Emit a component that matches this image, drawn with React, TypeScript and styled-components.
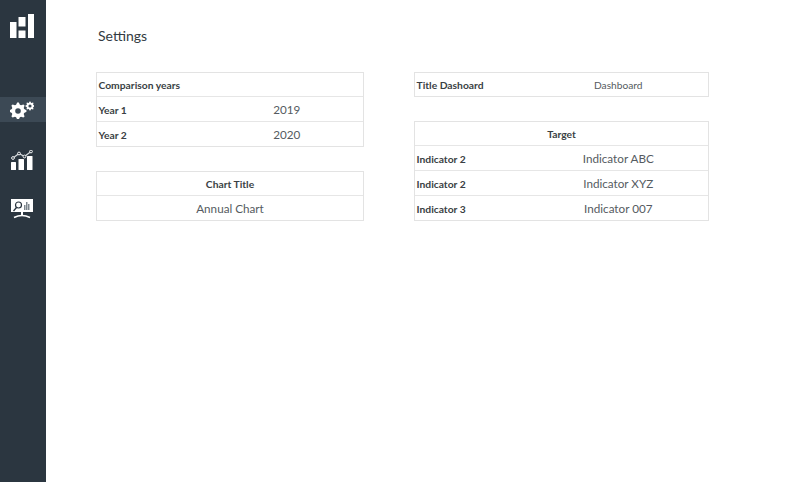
import React from "react";
import styled, { createGlobalStyle } from "styled-components";

const Global = createGlobalStyle`
  html, body { margin: 0; padding: 0; background: #fff; }
  body { font-family: Lato, "Open Sans", sans-serif; }
`;

const Page = styled.div`
  display: flex;
  width: 800px;
  height: 482px;
  overflow: hidden;
  background: #fff;
`;

const Sidebar = styled.nav`
  width: 46px;
  flex: none;
  background: #2b3640;
  display: flex;
  flex-direction: column;
`;

const NavItem = styled.div<{ $active?: boolean; $gap?: number }>`
  height: 25px;
  margin-top: ${(p) => p.$gap ?? 0}px;
  padding-right: 3px;
  display: flex;
  align-items: center;
  justify-content: center;
  background: ${(p) => (p.$active ? "#3c4955" : "transparent")};
`;

const Logo = styled.div`
  height: 24px;
  padding: 14px 2px 0 0;
  margin-bottom: 59px;
  display: flex;
  align-items: center;
  justify-content: center;
`;

const Main = styled.main`
  flex: 1;
  padding: 26px 0 0 50px;
`;

const Title = styled.h1`
  margin: 0 0 26px 2px;
  font-size: 14px;
  line-height: 20px;
  font-weight: 400;
  color: #333b42;
`;

const Columns = styled.div`
  display: flex;
  gap: 50px;
  align-items: flex-start;
`;

const Column = styled.div<{ $width: number }>`
  width: ${(p) => p.$width}px;
  display: flex;
  flex-direction: column;
  gap: 24px;
`;

const Table = styled.div`
  border: 1px solid #e3e3e3;
  display: flex;
  flex-direction: column;
`;

const Row = styled.div`
  height: 24px;
  display: flex;
  align-items: center;
  border-top: 1px solid #e6e6e6;
  &:first-child { height: 23px; border-top: none; }
`;

const Label = styled.div<{ $fixed?: boolean; $center?: boolean }>`
  width: ${(p) => (p.$fixed ? "112px" : "auto")};
  flex: ${(p) => (p.$fixed ? "none" : "1")};
  padding-left: ${(p) => (p.$center ? 0 : 1.5)}px;
  text-align: ${(p) => (p.$center ? "center" : "left")};
  font-size: 10.3px;
  font-weight: 700;
  color: #3a3f44;
  white-space: nowrap;
  ${Row}:not(:first-child) & { padding-top: 1px; }
`;

const Value = styled.div<{ $small?: boolean }>`
  flex: 1;
  text-align: center;
  font-size: ${(p) => (p.$small ? 10.2 : 11.7)}px;
  color: #555b61;
  white-space: nowrap;
`;

const LogoIcon = () => (
  <svg width="24" height="24" viewBox="0 0 24 24" fill="#fff">
    <rect x="0" y="8" width="6.5" height="16" />
    <rect x="8.5" y="3" width="7" height="9.5" />
    <rect x="8.5" y="16.5" width="7" height="7.5" />
    <rect x="18" y="0" width="6" height="24" />
  </svg>
);

const gearPath = (cx: number, cy: number, r: number, teeth: number) => {
  let d = "";
  const n = teeth * 4;
  for (let i = 0; i < n; i++) {
    const a = (i / n) * Math.PI * 2 - Math.PI / n;
    const rad = i % 4 === 0 || i % 4 === 1 ? r : r * 0.76;
    d += `${i === 0 ? "M" : "L"}${(cx + rad * Math.cos(a)).toFixed(2)} ${(cy + rad * Math.sin(a)).toFixed(2)}`;
  }
  return d + "Z";
};

const GearsIcon = () => (
  <svg width="24" height="18" viewBox="1 0 24 18">
    <path d={gearPath(9, 10, 8.5, 8)} fill="#fff" />
    <circle cx="9" cy="10" r="2.8" fill="#3c4955" />
    <path d={gearPath(21, 5, 4.6, 8)} fill="#fff" />
    <circle cx="21" cy="5" r="1.6" fill="#3c4955" />
  </svg>
);

const ChartIcon = () => (
  <svg width="22" height="20" viewBox="0 0 22 20" fill="#fff">
    <rect x="0" y="12" width="5" height="8" rx="0.5" />
    <rect x="7.5" y="9" width="5.5" height="11" rx="0.5" />
    <rect x="16" y="6" width="5.5" height="14" rx="0.5" />
    <path d="M2 8L8 3.5L13.5 6.5L20 1.5" stroke="#d5d9dc" strokeWidth="1.2" fill="none" />
    <circle cx="2" cy="8" r="1.4" fill="#2b3640" stroke="#fff" strokeWidth="0.9" />
    <circle cx="8" cy="3.5" r="1.4" fill="#2b3640" stroke="#fff" strokeWidth="0.9" />
    <circle cx="13.5" cy="6.5" r="1.4" fill="#2b3640" stroke="#fff" strokeWidth="0.9" />
    <circle cx="20" cy="1.5" r="1.4" fill="#2b3640" stroke="#fff" strokeWidth="0.9" />
  </svg>
);

const ScreenIcon = () => (
  <svg width="22" height="20" viewBox="0 0 22 20">
    <rect x="0" y="0" width="22" height="13" fill="#fff" />
    <circle cx="7.5" cy="6" r="3" fill="none" stroke="#2b3640" strokeWidth="1.2" />
    <path d="M5.5 8.5L2.5 12" stroke="#2b3640" strokeWidth="1.3" />
    <rect x="13" y="6" width="1.5" height="5" fill="#7d868d" />
    <rect x="15" y="3" width="1.5" height="8" fill="#7d868d" />
    <rect x="17" y="5" width="1.5" height="6" fill="#7d868d" />
    <path d="M3 18.5Q11 14.5 19 18.5" stroke="#fff" strokeWidth="1.5" fill="none" />
    <rect x="10" y="13" width="2" height="3.5" fill="#fff" />
  </svg>
);

export default function App() {
  return (
    <Page>
      <Global />
      <Sidebar>
        <Logo><LogoIcon /></Logo>
        <NavItem $active><GearsIcon /></NavItem>
        <NavItem $gap={25}><ChartIcon /></NavItem>
        <NavItem $gap={24}><ScreenIcon /></NavItem>
      </Sidebar>
      <Main>
        <Title>Settings</Title>
        <Columns>
          <Column $width={268}>
            <Table>
              <Row><Label>Comparison years</Label></Row>
              <Row><Label $fixed>Year 1</Label><Value>2019</Value></Row>
              <Row><Label $fixed>Year 2</Label><Value>2020</Value></Row>
            </Table>
            <Table>
              <Row><Label $center>Chart Title</Label></Row>
              <Row><Value>Annual Chart</Value></Row>
            </Table>
          </Column>
          <Column $width={295}>
            <Table>
              <Row><Label $fixed>Title Dashoard</Label><Value $small>Dashboard</Value></Row>
            </Table>
            <Table>
              <Row><Label $center>Target</Label></Row>
              <Row><Label $fixed>Indicator 2</Label><Value>Indicator ABC</Value></Row>
              <Row><Label $fixed>Indicator 2</Label><Value>Indicator XYZ</Value></Row>
              <Row><Label $fixed>Indicator 3</Label><Value>Indicator 007</Value></Row>
            </Table>
          </Column>
        </Columns>
      </Main>
    </Page>
  );
}
